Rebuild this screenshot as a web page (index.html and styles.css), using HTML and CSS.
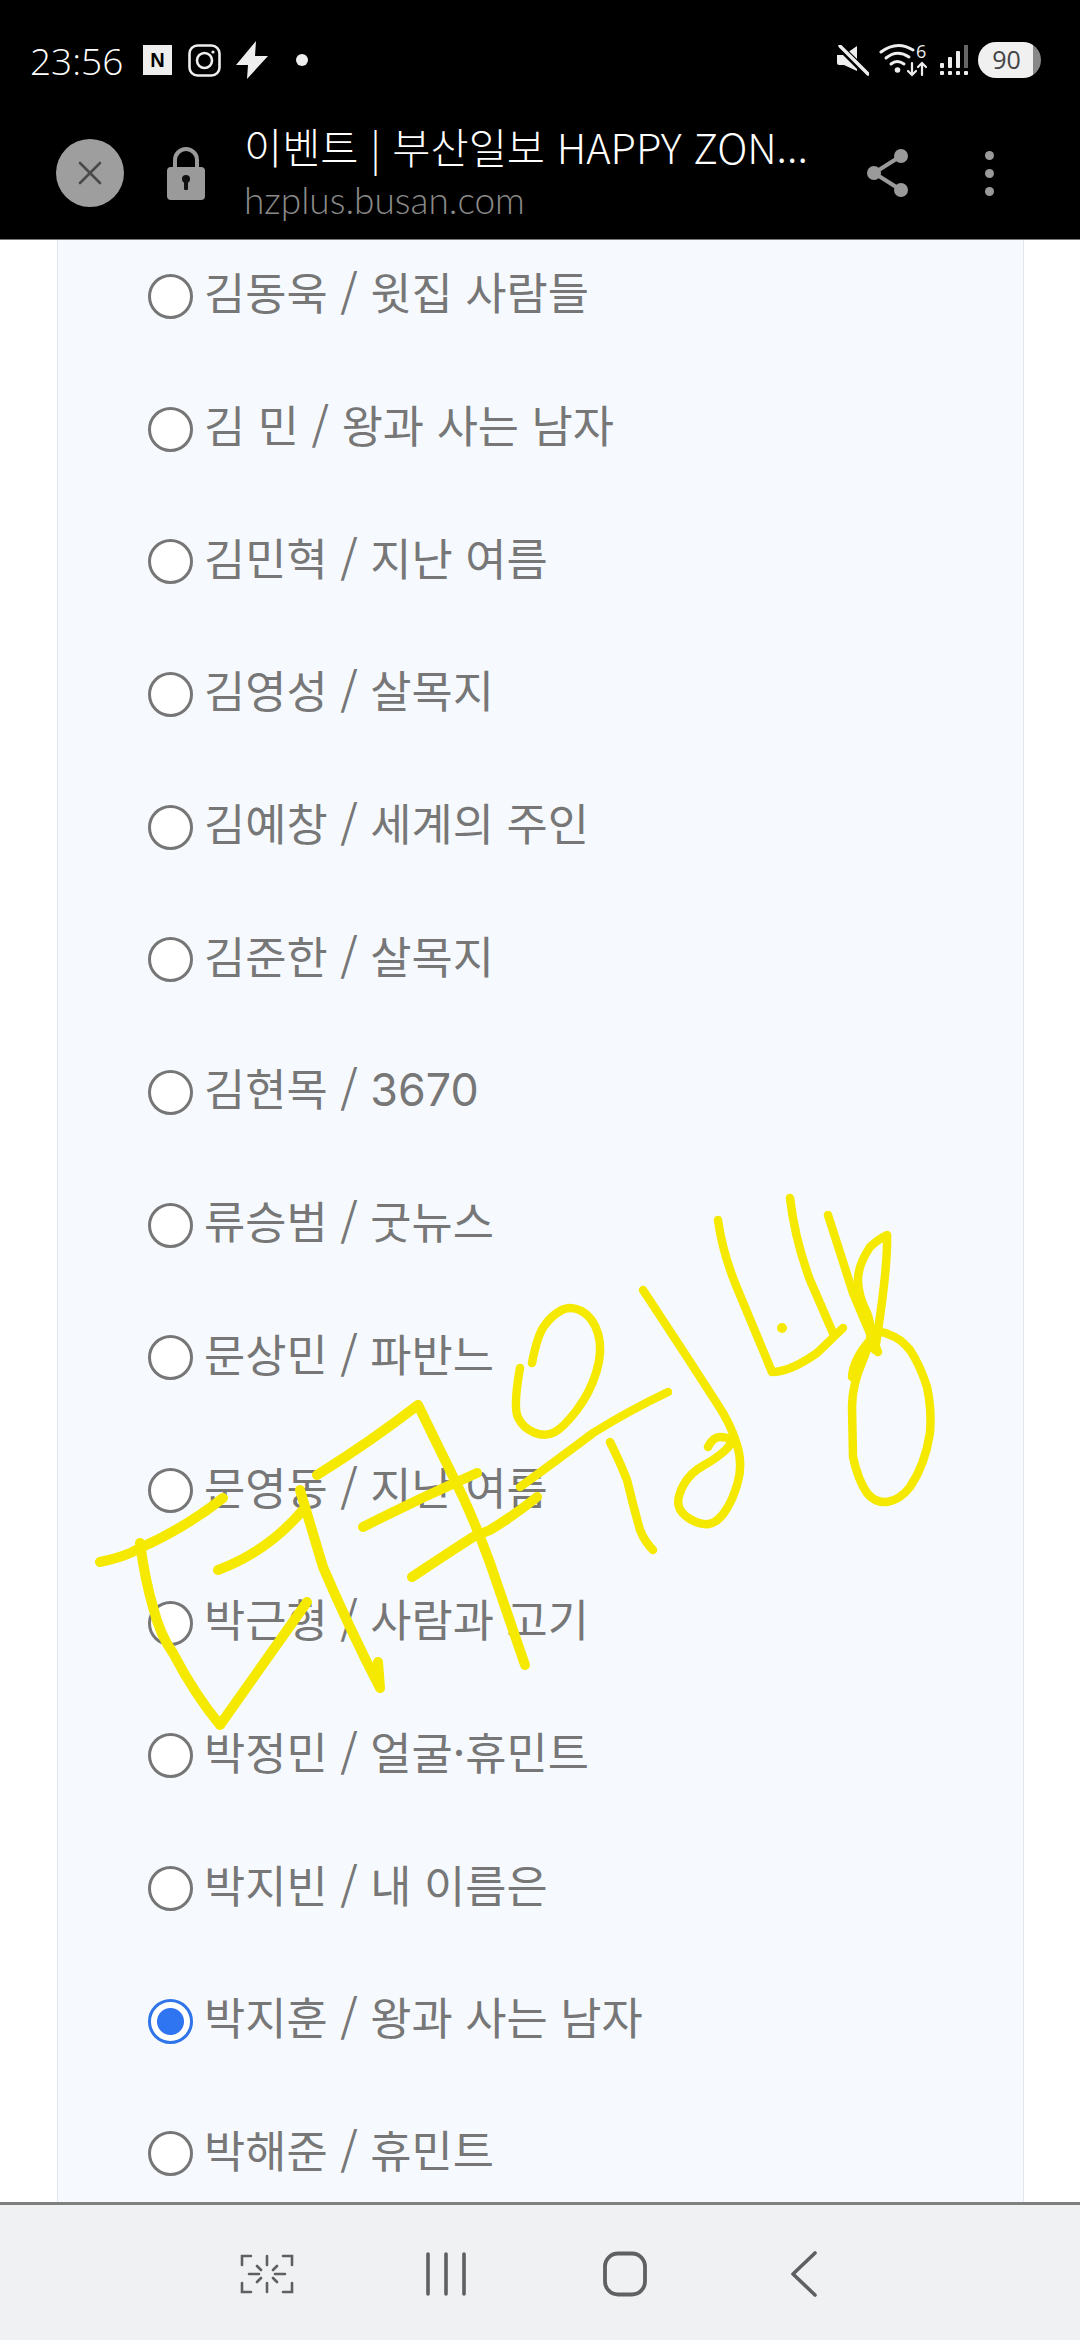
FILE: index.html
```html
<!DOCTYPE html>
<html lang="ko">
<head>
    <meta charset="UTF-8">
    <meta name="viewport" content="width=device-width, initial-scale=1.0">
    <title>이벤트 | 부산일보 HAPPY ZONE</title>
    <link rel="stylesheet" href="styles.css">
</head>
<body>

    <header class="top">
        <!-- Status bar -->
        <div class="status">
            <div class="status-left">
                <span class="time">23:56</span>
                <span class="n-icon">N</span>
                <svg class="insta" width="33" height="33" viewBox="0 0 33 33" fill="none" stroke="#eee" stroke-width="2.6">
                    <rect x="1.5" y="1.5" width="30" height="30" rx="8"/>
                    <circle cx="16.5" cy="16.5" r="7.5"/>
                    <circle cx="25" cy="8" r="1.6" fill="#eee" stroke="none"/>
                </svg>
                <svg class="bolt" width="34" height="38" viewBox="0 0 34 38">
                    <path d="M21 0 L1 24 L13 24 L12 38 L33 15 L20 15 Z" fill="#eee"/>
                </svg>
                <span class="dot"></span>
            </div>
            <div class="status-right">
                <svg class="mute" width="33" height="31" viewBox="0 0 33 31">
                    <path d="M1 10 H8 L21 1 V26 L8 20 H3 Q1 20 1 18 Z" fill="#eee"/>
                    <path d="M4 2 L31 29" stroke="#000" stroke-width="7"/>
                    <path d="M4 1 L32 29" stroke="#eee" stroke-width="3.4" stroke-linecap="round"/>
                </svg>
                <svg class="wifi" width="50" height="44" viewBox="0 -5 50 44" fill="none" stroke="#eee" stroke-linecap="round">
                    <path d="M2 9 Q18 -3 34 7" stroke-width="3"/>
                    <path d="M7 15 Q18 6 30 14" stroke-width="3"/>
                    <path d="M12 21 Q18 16 25 21" stroke-width="3"/>
                    <circle cx="18.5" cy="27" r="2.8" fill="#eee" stroke="none"/>
                    <path d="M33 20 V32 M29 28 L33 32 L37 28" stroke-width="2.2"/>
                    <path d="M43 32 V20 M39 24 L43 20 L47 24" stroke-width="2.2"/>
                    <text x="37" y="15" class="wifi-six">6</text>
                </svg>
                <svg class="signal" width="30" height="32" viewBox="0 0 30 32" fill="#eee">
                    <rect x="1" y="19" width="4" height="5" rx="1"/>
                    <rect x="1" y="27" width="4" height="4" rx="1"/>
                    <rect x="9" y="13" width="4" height="11" rx="1"/>
                    <rect x="9" y="27" width="4" height="4" rx="1"/>
                    <rect x="17" y="7" width="4" height="17" rx="1"/>
                    <rect x="17" y="27" width="4" height="4" rx="1"/>
                    <rect x="25" y="1" width="4" height="23" fill="#666"/>
                    <rect x="25" y="27" width="4" height="4" rx="1"/>
                </svg>
                <span class="battery">90</span>
            </div>
        </div>

        <!-- Custom tab toolbar -->
        <div class="toolbar">
            <span class="close-btn">
                <svg width="24" height="24" viewBox="0 0 24 24" stroke="#4a4a4a" stroke-width="2.6" stroke-linecap="round">
                    <path d="M2 2 L22 22 M22 2 L2 22"/>
                </svg>
            </span>
            <svg class="lock" width="38" height="53" viewBox="0 0 38 53">
                <path d="M8 22 V13 A11 11 0 0 1 30 13 V22" fill="none" stroke="#9a9a9a" stroke-width="4"/>
                <rect y="20" width="38" height="33" rx="4" fill="#9a9a9a"/>
                <circle cx="19" cy="32" r="4" fill="#111"/>
                <rect x="17" y="33" width="4" height="10" rx="1" fill="#111"/>
            </svg>
            <div class="page-info">
                <div class="page-title">이벤트 | 부산일보 HAPPY ZON...</div>
                <div class="page-url">hzplus.busan.com</div>
            </div>
            <svg class="share" width="44" height="50" viewBox="0 0 44 50" fill="#9a9a9a">
                <path d="M35 8 L8 25 L35 42" fill="none" stroke="#9a9a9a" stroke-width="4"/>
                <circle cx="35" cy="8" r="7"/>
                <circle cx="8" cy="25" r="7"/>
                <circle cx="35" cy="42" r="7"/>
            </svg>
            <div class="more"><span></span><span></span><span></span></div>
        </div>
    </header>

    <main class="content">
        <form class="panel">
            <label class="row"><input type="radio" name="actor"><span class="row-label">김동욱 / 윗집 사람들</span></label>
            <label class="row"><input type="radio" name="actor"><span class="row-label">김 민 / 왕과 사는 남자</span></label>
            <label class="row"><input type="radio" name="actor"><span class="row-label">김민혁 / 지난 여름</span></label>
            <label class="row"><input type="radio" name="actor"><span class="row-label">김영성 / 살목지</span></label>
            <label class="row"><input type="radio" name="actor"><span class="row-label">김예창 / 세계의 주인</span></label>
            <label class="row"><input type="radio" name="actor"><span class="row-label">김준한 / 살목지</span></label>
            <label class="row"><input type="radio" name="actor"><span class="row-label">김현목 / <span class="num">3670</span></span></label>
            <label class="row"><input type="radio" name="actor"><span class="row-label">류승범 / 굿뉴스</span></label>
            <label class="row"><input type="radio" name="actor"><span class="row-label">문상민 / 파반느</span></label>
            <label class="row"><input type="radio" name="actor"><span class="row-label">문영동 / 지난 여름</span></label>
            <label class="row"><input type="radio" name="actor"><span class="row-label">박근형 / 사람과 고기</span></label>
            <label class="row"><input type="radio" name="actor"><span class="row-label">박정민 / 얼굴·휴민트</span></label>
            <label class="row"><input type="radio" name="actor"><span class="row-label">박지빈 / 내 이름은</span></label>
            <label class="row"><input type="radio" name="actor" checked><span class="row-label">박지훈 / 왕과 사는 남자</span></label>
            <label class="row"><input type="radio" name="actor"><span class="row-label">박해준 / 휴민트</span></label>
        </form>
    </main>

    <nav class="navbar">
        <span class="nav-btn">
            <svg width="54" height="40" viewBox="0 0 54 40" fill="none" stroke="#5f6062" stroke-width="2.6" stroke-linecap="round">
                <path d="M11 2 H2 V11 M43 2 H52 V11 M11 38 H2 V29 M43 38 H52 V29"/>
                <path d="M27 2 V11 M27 29 V38 M9 20 H19 M35 20 H45 M17 12 L21 16 M37 12 L33 16 M17 28 L21 24 M37 28 L33 24"/>
            </svg>
        </span>
        <span class="nav-btn">
            <svg width="40" height="44" viewBox="0 0 40 44" stroke="#5f6062" stroke-width="3.6" stroke-linecap="round">
                <path d="M2 2 V42 M20 2 V42 M38 2 V42"/>
            </svg>
        </span>
        <span class="nav-btn">
            <svg width="46" height="46" viewBox="0 0 46 46" fill="none" stroke="#5f6062" stroke-width="3.8">
                <rect x="3" y="2.5" width="40" height="41" rx="13"/>
            </svg>
        </span>
        <span class="nav-btn">
            <svg width="28" height="46" viewBox="0 0 28 46" fill="none" stroke="#5f6062" stroke-width="3.6" stroke-linecap="round" stroke-linejoin="round">
                <path d="M25 2 L3 23 L25 44"/>
            </svg>
        </span>
    </nav>

    <!-- Handwriting drawn over the screenshot -->
    <svg class="scribble" width="1080" height="2340" viewBox="0 0 1080 2340" fill="none" stroke="#f5e900" stroke-width="10" stroke-linecap="round" stroke-linejoin="round">
        <path d="M100 1562 Q125 1557 140 1548 Q185 1528 223 1498"/>
        <path d="M140 1543 Q145 1580 153 1607 Q160 1635 173 1653 Q195 1695 220 1725 L307 1602"/>
        <path d="M218 1570 Q267 1552 303 1510"/>
        <path d="M300 1490 L323 1567 Q350 1630 380 1688 L378 1662"/>
        <path d="M317 1475 Q370 1442 418 1405 L463 1497 Q478 1530 490 1563 L525 1665"/>
        <path d="M363 1527 Q420 1498 477 1473"/>
        <path d="M412 1577 Q445 1555 473 1537 L490 1530 Q515 1515 537 1497"/>
        <g stroke-width="8.5">
            <path d="M520 1487 Q560 1458 593 1433 Q630 1410 668 1392"/>
            <path d="M520 1368 Q513 1407 518 1417.5 Q523 1428 534 1432.5 Q545 1437 554 1432.5 Q563 1428 576.5 1410.5 Q590 1393 596.5 1371.5 Q603 1350 598 1333.5 Q593 1317 581.5 1311 Q570 1305 560 1311 Q550 1317 543.5 1327 Q537 1337 532 1363"/>
            <path d="M643 1290 L687 1357 L718 1405 Q730 1423 736.5 1443 Q743 1463 738 1481.5 Q733 1500 725 1511.5 Q717 1523 708.5 1524 Q700 1525 690 1519 Q680 1513 678.5 1505 Q677 1497 683.5 1485 Q690 1473 703.5 1465.5 Q717 1458 725 1450.5 Q733 1443 730 1440 Q727 1437 720 1437 Q713 1437 708 1447"/>
            <path d="M610 1442 Q620 1462 627 1480 Q633 1505 640 1530 Q645 1542 653 1550"/>
            <path d="M718 1220 Q722 1250 735 1283 L772 1372 Q790 1372 817 1353 L843 1328"/>
            <path d="M790 1198 Q795 1240 810 1280 L833 1333"/>
            <path d="M828 1215 L853 1293 L878 1352"/>
            <path d="M852 1377 Q853 1360 870 1340 Q872 1325 867 1313 Q858 1295 858 1280 Q858 1265 870 1247 Q877 1240 887 1235 Q888 1265 877 1337 L875 1350"/>
            <path d="M878 1333 Q870 1340 863 1360 Q852 1385 852 1407 L853 1457 Q858 1480 867 1493 Q875 1503 887 1502 Q900 1500 910 1487 Q925 1465 930 1433 Q932 1410 927 1387 Q920 1365 910 1350 Q900 1338 890 1335 Q882 1331 878 1333 Z"/>
        </g>
        <circle cx="782" cy="1328" r="5" fill="#f5e900" stroke="none"/>
    </svg>

</body>
</html>
```

FILE: styles.css
```css
* {
    box-sizing: border-box;
    margin: 0;
    padding: 0;
}

html,
body {
    height: 100%;
}

body {
    position: relative;
    display: flex;
    flex-direction: column;
    height: 2340px;
    overflow: hidden;
    background-color: #fff;
    font-family: 'Noto Sans CJK KR', 'Noto Sans', sans-serif;
}

.top {
    flex: none;
    height: 240px;
    background-color: #000;
    border-bottom: 1px solid #777;
}

.status {
    display: flex;
    justify-content: space-between;
    align-items: center;
    height: 120px;
    padding: 0 39px 0 30px;
}

.status-left,
.status-right {
    display: flex;
    align-items: center;
}

.time {
    width: 113px;
    font-family: 'Open Sans', sans-serif;
    font-size: 37px;
    font-weight: 300;
    color: #fff;
}

.n-icon {
    width: 29px;
    height: 30px;
    background-color: #eee;
    color: #000;
    font-family: 'Liberation Sans', sans-serif;
    font-size: 20px;
    font-weight: bold;
    line-height: 30px;
    text-align: center;
}

.insta {
    margin-left: 16px;
}

.bolt {
    margin-left: 14px;
}

.dot {
    width: 12px;
    height: 12px;
    margin-left: 27px;
    border-radius: 50%;
    background-color: #eee;
}

.wifi {
    margin-left: 10px;
}

.wifi-six {
    font-family: 'Open Sans', sans-serif;
    font-size: 18px;
    fill: #eee;
    stroke: none;
}

.signal {
    margin-left: 10px;
}

.battery {
    width: 63px;
    height: 36px;
    margin-left: 9px;
    padding-right: 6px;
    border-radius: 18px;
    background: linear-gradient(to right, #f0f0f0 88%, #888 88%);
    color: #444;
    font-family: 'Open Sans', sans-serif;
    font-size: 25px;
    line-height: 35px;
    text-align: center;
}

.toolbar {
    display: flex;
    align-items: center;
    height: 106px;
    padding-left: 56px;
}

.close-btn {
    display: flex;
    align-items: center;
    justify-content: center;
    flex: none;
    width: 68px;
    height: 68px;
    border-radius: 50%;
    background-color: #9e9e9e;
}

.lock {
    flex: none;
    margin-left: 43px;
}

.page-info {
    width: 575px;
    margin-left: 39px;
    margin-top: -8px;
}

.page-title {
    color: #fff;
    font-size: 41.5px;
    font-weight: 300;
    line-height: 61px;
    white-space: nowrap;
}

.page-url {
    color: #8a8a8a;
    font-family: 'Lato', sans-serif;
    font-size: 37px;
    font-weight: 300;
    line-height: 45px;
}

.share {
    flex: none;
    margin-left: 47px;
}

.more {
    display: flex;
    flex-direction: column;
    gap: 9px;
    margin-left: 75px;
}

.more span {
    width: 9px;
    height: 9px;
    border-radius: 50%;
    background-color: #9a9a9a;
}

.content {
    flex: 1;
    min-height: 0;
    overflow: hidden;
}

.panel {
    width: 967px;
    margin: -10px 0 0 57px;
    background-color: #f6fafe;
    border: 1px solid #e3e8ef;
    border-top: none;
}

.row {
    display: flex;
    align-items: center;
    height: 132.7px;
    padding-left: 90px;
    color: #777;
    font-size: 44.8px;
    font-weight: 400;
}

.row-label {
    margin-top: -11px;
    margin-left: 11px;
}

.num {
    font-family: 'Inter', sans-serif;
}

.row input {
    appearance: none;
    flex: none;
    width: 45px;
    height: 45px;
    border: 3px solid #767676;
    border-radius: 50%;
    background-color: #fff;
}

.row input:checked {
    border-color: #2f74e8;
    background-color: #fff;
    background-image: radial-gradient(circle, #2f74f0 13px, transparent 14px);
}

.navbar {
    flex: none;
    display: flex;
    justify-content: center;
    align-items: center;
    height: 138px;
    padding: 2px 9px 0 0;
    background-color: #f0f1f3;
    border-top: 3px solid #808080;
}

.nav-btn {
    display: flex;
    justify-content: center;
    align-items: center;
    width: 179px;
}

.scribble {
    position: absolute;
    left: 0;
    top: 0;
}
```
